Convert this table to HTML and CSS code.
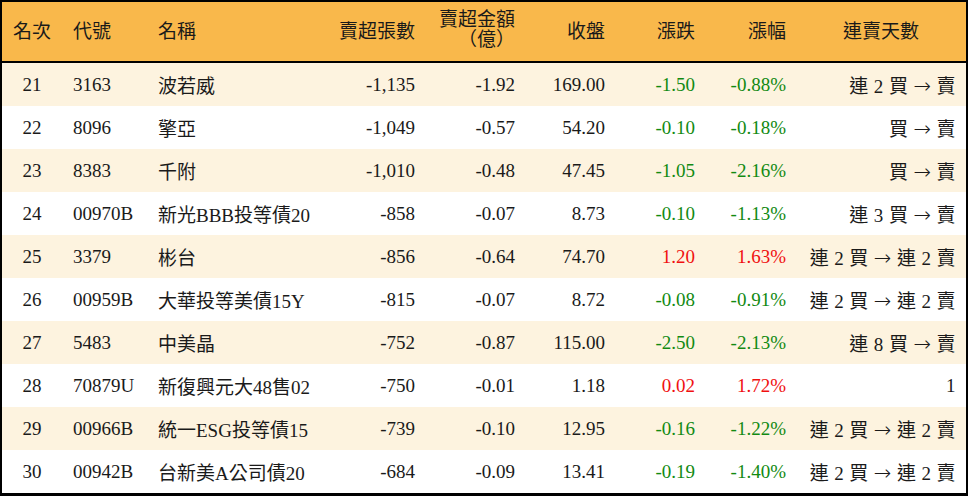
FILE: index.html
```html
<!DOCTYPE html>
<html lang="zh-Hant">
<head>
<meta charset="utf-8">
<title>賣超排行</title>
<link rel="stylesheet" href="styles.css">
</head>
<body>
<div class="board">
  <div class="row head">
    <div class="c c1">名次</div>
    <div class="c c2">代號</div>
    <div class="c c3">名稱</div>
    <div class="c r">賣超張數</div>
    <div class="c r two">賣超金額<br>（億）</div>
    <div class="c r">收盤</div>
    <div class="c r">漲跌</div>
    <div class="c r">漲幅</div>
    <div class="c c9h">連賣天數</div>
  </div>
  <div class="row alt">
    <div class="c c1">21</div><div class="c c2">3163</div><div class="c c3">波若威</div>
    <div class="c r">-1,135</div><div class="c r">-1.92</div><div class="c r">169.00</div>
    <div class="c r dn">-1.50</div><div class="c r dn">-0.88%</div><div class="c r days">連 2 買 <span class="ar">→</span> 賣</div>
  </div>
  <div class="row">
    <div class="c c1">22</div><div class="c c2">8096</div><div class="c c3">擎亞</div>
    <div class="c r">-1,049</div><div class="c r">-0.57</div><div class="c r">54.20</div>
    <div class="c r dn">-0.10</div><div class="c r dn">-0.18%</div><div class="c r days">買 <span class="ar">→</span> 賣</div>
  </div>
  <div class="row alt">
    <div class="c c1">23</div><div class="c c2">8383</div><div class="c c3">千附</div>
    <div class="c r">-1,010</div><div class="c r">-0.48</div><div class="c r">47.45</div>
    <div class="c r dn">-1.05</div><div class="c r dn">-2.16%</div><div class="c r days">買 <span class="ar">→</span> 賣</div>
  </div>
  <div class="row">
    <div class="c c1">24</div><div class="c c2">00970B</div><div class="c c3">新光BBB投等債20</div>
    <div class="c r">-858</div><div class="c r">-0.07</div><div class="c r">8.73</div>
    <div class="c r dn">-0.10</div><div class="c r dn">-1.13%</div><div class="c r days">連 3 買 <span class="ar">→</span> 賣</div>
  </div>
  <div class="row alt">
    <div class="c c1">25</div><div class="c c2">3379</div><div class="c c3">彬台</div>
    <div class="c r">-856</div><div class="c r">-0.64</div><div class="c r">74.70</div>
    <div class="c r up">1.20</div><div class="c r up">1.63%</div><div class="c r days">連 2 買 <span class="ar">→</span> 連 2 賣</div>
  </div>
  <div class="row">
    <div class="c c1">26</div><div class="c c2">00959B</div><div class="c c3">大華投等美債15Y</div>
    <div class="c r">-815</div><div class="c r">-0.07</div><div class="c r">8.72</div>
    <div class="c r dn">-0.08</div><div class="c r dn">-0.91%</div><div class="c r days">連 2 買 <span class="ar">→</span> 連 2 賣</div>
  </div>
  <div class="row alt">
    <div class="c c1">27</div><div class="c c2">5483</div><div class="c c3">中美晶</div>
    <div class="c r">-752</div><div class="c r">-0.87</div><div class="c r">115.00</div>
    <div class="c r dn">-2.50</div><div class="c r dn">-2.13%</div><div class="c r days">連 8 買 <span class="ar">→</span> 賣</div>
  </div>
  <div class="row">
    <div class="c c1">28</div><div class="c c2">70879U</div><div class="c c3">新復興元大48售02</div>
    <div class="c r">-750</div><div class="c r">-0.01</div><div class="c r">1.18</div>
    <div class="c r up">0.02</div><div class="c r up">1.72%</div><div class="c r days">1</div>
  </div>
  <div class="row alt">
    <div class="c c1">29</div><div class="c c2">00966B</div><div class="c c3">統一ESG投等債15</div>
    <div class="c r">-739</div><div class="c r">-0.10</div><div class="c r">12.95</div>
    <div class="c r dn">-0.16</div><div class="c r dn">-1.22%</div><div class="c r days">連 2 買 <span class="ar">→</span> 連 2 賣</div>
  </div>
  <div class="row">
    <div class="c c1">30</div><div class="c c2">00942B</div><div class="c c3">台新美A公司債20</div>
    <div class="c r">-684</div><div class="c r">-0.09</div><div class="c r">13.41</div>
    <div class="c r dn">-0.19</div><div class="c r dn">-1.40%</div><div class="c r days">連 2 買 <span class="ar">→</span> 連 2 賣</div>
  </div>
</div>
</body>
</html>
```
FILE: styles.css
```css
html, body {
  margin: 0;
  padding: 0;
  background: #ffffff;
}
body {
  font-family: "Liberation Serif", "Noto Sans CJK TC", serif;
  font-size: 19px;
  color: #1a1a1a;
}
.board {
  width: 964px;
  border: 2px solid #000;
  border-bottom-width: 3px;
}
.row {
  display: grid;
  grid-template-columns: 60px 88px 180px 95px 100px 90px 90px 91px 170px;
  height: 43px;
  align-items: center;
  background: #ffffff;
}
.row.alt {
  background: #fdf3df;
}
.row.head {
  height: 59px;
  background: #f9b84b;
  border-bottom: 2px solid #000;
  line-height: 20px;
}
.c {
  white-space: nowrap;
}
.c1 {
  text-align: center;
}
.c2 {
  padding-left: 11px;
}
.c3 {
  padding-left: 8px;
}
.r {
  text-align: right;
  padding-right: 10px;
}
.days {
  letter-spacing: 0.4px;
  padding-right: 10px;
}
.c9h {
  text-align: center;
}
.two {
  line-height: 20px;
  margin-top: -4px;
}
.ar {
  font-family: "DejaVu Sans", sans-serif;
  font-size: 21px;
  font-weight: 300;
}
.dn {
  color: #128a12;
}
.up {
  color: #f01010;
}
```
